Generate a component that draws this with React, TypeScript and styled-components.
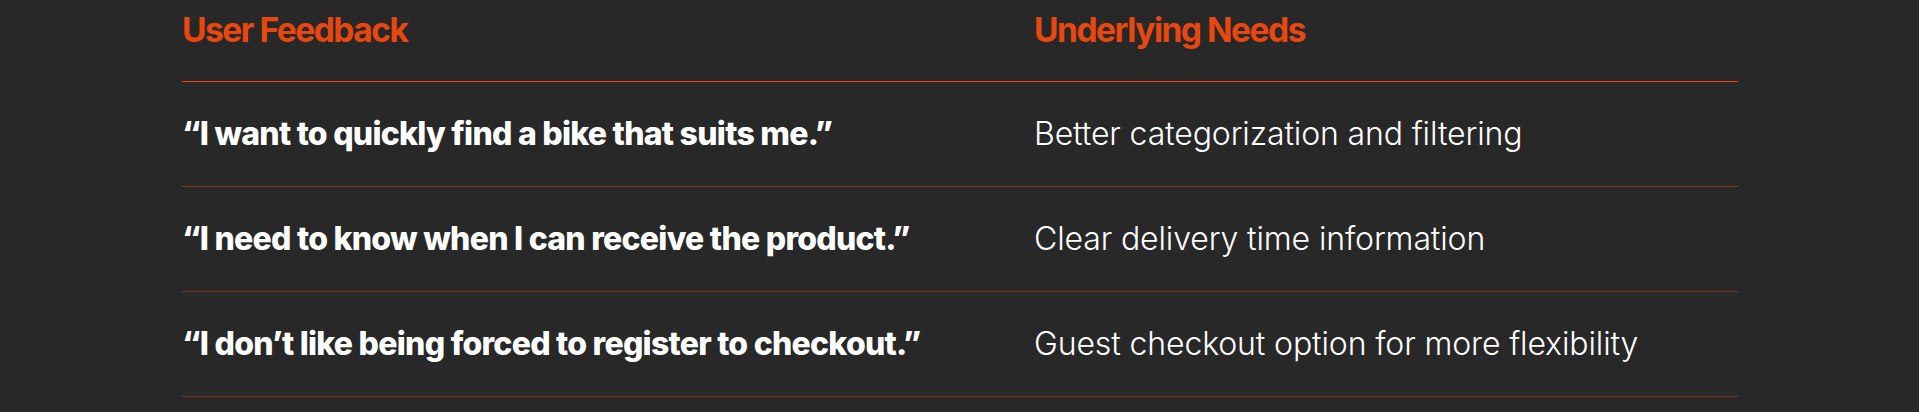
import React from "react";
import styled, { createGlobalStyle } from "styled-components";

const Global = createGlobalStyle`
  html, body {
    margin: 0;
    padding: 0;
    background: #282828;
  }
  body {
    font-family: "Inter", "Noto Sans", sans-serif;
  }
`;

const Page = styled.div`
  width: 1919px;
  height: 412px;
  background: #282828;
  overflow: hidden;
`;

const Table = styled.div`
  margin-left: 182px;
  width: 1556px;
  display: flex;
  flex-direction: column;
`;

const HeadRow = styled.div`
  display: grid;
  grid-template-columns: 852px 1fr;
  height: 81px;
  border-bottom: 1px solid #e8480f;
  box-sizing: content-box;
`;

const HeadCell = styled.div`
  padding-top: 14px;
  font-family: "Inter", sans-serif;
  font-weight: 700;
  font-size: 33.5px;
  line-height: 1;
  letter-spacing: -0.044em;
  color: #e8480f;
  white-space: nowrap;
`;

const Row = styled.div`
  display: grid;
  grid-template-columns: 852px 1fr;
  align-items: center;
  height: 104px;
  border-bottom: 1px solid #7a3620;
  box-sizing: content-box;
`;

const Quote = styled.div`
  font-family: "Inter", sans-serif;
  font-weight: 800;
  font-size: 32px;
  line-height: 1;
  letter-spacing: -0.023em;
  color: #ffffff;
  white-space: nowrap;
  margin-top: -1px;
`;

const Need = styled.div`
  font-family: "Inter", sans-serif;
  font-weight: 300;
  font-size: 32px;
  line-height: 1;
  letter-spacing: -0.004em;
  color: #ffffff;
  white-space: nowrap;
`;

const rows = [
  {
    quote: "“I want to quickly find a bike that suits me.”",
    need: "Better categorization and filtering",
  },
  {
    quote: "“I need to know when I can receive the product.”",
    need: "Clear delivery time information",
  },
  {
    quote: "“I don’t like being forced to register to checkout.”",
    need: "Guest checkout option for more flexibility",
  },
];

export default function App() {
  return (
    <Page>
      <Global />
      <Table>
        <HeadRow>
          <HeadCell>User Feedback</HeadCell>
          <HeadCell>Underlying Needs</HeadCell>
        </HeadRow>
        {rows.map((r) => (
          <Row key={r.quote}>
            <Quote>{r.quote}</Quote>
            <Need>{r.need}</Need>
          </Row>
        ))}
      </Table>
    </Page>
  );
}
